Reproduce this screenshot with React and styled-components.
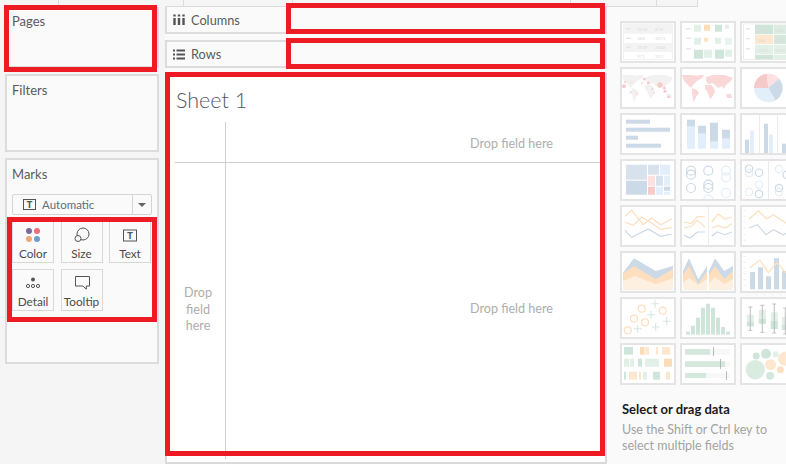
import React from "react";
import styled, { createGlobalStyle } from "styled-components";

const Global = createGlobalStyle`
  html, body { margin: 0; padding: 0; overflow: hidden; background: #fafafa; }
  * { box-sizing: border-box; }
  body { font-family: "Lato", "Liberation Sans", sans-serif; color: #555; }
`;

const Page = styled.div`
  position: relative;
  width: 786px;
  height: 464px;
  overflow: hidden;
  background: #fafafa;
  display: flex;
  flex-direction: column;
`;
const Strip = styled.div`
  flex: none;
  display: flex;
  width: 698px;
  height: 7px;
  background: #f5f5f5;
`;
const StripCell = styled.div`
  flex: none;
  width: ${(p) => p.$w}px;
  border-right: ${(p) => (p.$plain ? "0" : "1px solid #dcdcdc")};
  border-bottom: ${(p) => (p.$line ? "1px solid #dcdcdc" : "0")};
`;
const Body = styled.div`
  flex: 1;
  display: flex;
  min-height: 0;
`;
const LeftCol = styled.aside`
  flex: none;
  width: 165px;
  padding-left: 5px;
  padding-right: 6px;
  background: #f5f5f5;
  display: flex;
  flex-direction: column;
  gap: 6px;
`;
const Card = styled.section`
  flex: none;
  height: ${(p) => p.$h}px;
  background: #fafafa;
  border: 2px solid #dcdcdc;
  padding: ${(p) => p.$pt ?? 6}px 0 0 5px;
`;
const CardTitle = styled.div`
  font-size: 13px;
  line-height: 16px;
  color: #5a5a5a;
`;
const MarkSelect = styled.div`
  display: flex;
  align-items: center;
  width: 140px;
  height: 21px;
  margin-top: 12px;
  border: 1px solid #d4d4d4;
  border-radius: 2px;
  font-size: 11.5px;
  color: #5f6d7a;
`;
const SelectMain = styled.div`
  flex: 1;
  height: 100%;
  display: flex;
  align-items: center;
  gap: 6px;
  padding-left: 10px;
  border-right: 1px solid #d4d4d4;
`;
const SelectCaret = styled.div`
  flex: none;
  width: 18px;
  display: flex;
  justify-content: center;
  &::after {
    content: "";
    border-left: 4px solid transparent;
    border-right: 4px solid transparent;
    border-top: 4px solid #666;
  }
`;
const MarkGrid = styled.div`
  display: grid;
  grid-template-columns: repeat(3, 42px);
  grid-auto-rows: 42px;
  column-gap: 6.5px;
  row-gap: 6px;
  margin-top: 6px;
`;
const MarkButton = styled.div`
  display: flex;
  flex-direction: column;
  align-items: center;
  padding-top: 3px;
  border: 1px solid #d8d8d8;
  background: #fafafa;
  font-size: 11.75px;
  color: #4a4a4a;
  white-space: nowrap;
`;
const MarkIcon = styled.svg`
  display: block;
  flex: none;
  width: 20px;
  height: 20px;
  margin-bottom: 2px;
`;
const MarkLabel = styled.span`
  line-height: 14px;
`;
const TextIconGlyph = styled.text`
  font-family: "Liberation Mono", monospace;
  font-size: 10px;
  font-weight: 700;
  fill: #555;
`;

const Center = styled.main`
  flex: none;
  width: 442px;
  display: flex;
  flex-direction: column;
`;
const Shelf = styled.div`
  flex: none;
  height: ${(p) => p.$h}px;
  margin-bottom: ${(p) => p.$mb}px;
  display: flex;
  align-items: center;
  gap: 6px;
  padding-left: 6px;
  background: #fafafa;
  border: 2px solid #dcdcdc;
  border-top-width: ${(p) => p.$bt}px;
  font-size: 12.75px;
  color: #5a5a5a;
`;
const ShelfIcon = styled.svg`
  display: block;
  flex: none;
  width: 12px;
  height: 11px;
`;
const SheetPanel = styled.div`
  flex: 1;
  min-height: 0;
  display: flex;
  flex-direction: column;
  background: #fff;
  border: 2px solid #dadada;
  border-top: 0;
  padding: 0 0 3px 8px;
`;
const SheetTitle = styled.h1`
  flex: none;
  margin: 16px 0 0 1px;
  height: 33px;
  font-size: 21.5px;
  line-height: 22px;
  font-weight: 300;
  color: #4d5a66;
`;
const ViewGrid = styled.div`
  flex: 1;
  min-height: 0;
  display: grid;
  grid-template-columns: 51px 1fr;
  grid-template-rows: 41px 1fr;
  font-size: 12.6px;
  color: #aeaeae;
`;
const AxisCell = styled.div`
  display: flex;
  align-items: center;
  justify-content: center;
  text-align: center;
  line-height: 16.5px;
  padding: 0 4px 2px 0;
  border-right: 1px solid #cfcfcf;
  border-bottom: ${(p) => (p.$under ? "1px solid #cfcfcf" : "0")};
`;
const DropCell = styled.div`
  display: flex;
  align-items: center;
  justify-content: flex-end;
  padding: ${(p) => p.$pt}px 52px ${(p) => p.$pb}px 0;
  border-bottom: ${(p) => (p.$under ? "1px solid #cfcfcf" : "0")};
`;

const RightCol = styled.aside`
  flex: 1;
  min-width: 0;
  padding: 14px 0 0 13px;
  background: #fafafa;
`;
const ThumbGrid = styled.div`
  display: grid;
  grid-template-columns: repeat(3, 56px);
  grid-auto-rows: 42px;
  gap: 4px;
`;
const Thumb = styled.div`
  width: 56px;
  height: 42px;
  background: #fff;
  border: 2px solid #e4e4e4;
  overflow: hidden;
`;
const ThumbArt = styled.svg`
  display: block;
  width: 52px;
  height: 38px;
`;
const ThumbNum = styled.text`
  font-family: "Lato", sans-serif;
  font-size: 4.5px;
  fill: #dcdcdc;
`;
const HintTitle = styled.div`
  margin: 17px 0 0 2px;
  font-size: 13px;
  line-height: 14px;
  font-weight: 700;
  color: #1a1a1a;
  white-space: nowrap;
`;
const HintText = styled.div`
  margin: 6px 0 0 2px;
  font-size: 12.5px;
  line-height: 16px;
  color: #a3a3a3;
  white-space: nowrap;
`;
const Highlight = styled.div`
  position: absolute;
  left: ${(p) => p.$x}px;
  top: ${(p) => p.$y}px;
  width: ${(p) => p.$w}px;
  height: ${(p) => p.$h}px;
  border: 5px solid #ed1c24;
  pointer-events: none;
`;

const BLUE = "#ccd9e6", LBLUE = "#e2eef9", OR = "#fddfc0", LOR = "#fdf0e0", GR = "#cfe5da", LGR = "#e2f0e8", PK = "#f7caca", LPK = "#fde0e0";

const Art = ({ children }) => <ThumbArt viewBox="2 2 52 38">{children}</ThumbArt>;

const R = ({ x, y, w, h, c }) => <rect x={x} y={y} width={w} height={h} fill={c} />;
const Line = ({ p, c = OR, w = 1.2 }) => <polyline points={p} fill="none" stroke={c} strokeWidth={w} />;
const Dash = ({ x = 6, w = 5, y }) => <rect x={x} y={y - 0.7} width={w} height={1.4} fill="#e6e6e6" />;
const Ring = ({ x, y, r = 4.5, c = BLUE }) => <circle cx={x} cy={y} r={r} fill="none" stroke={c} strokeWidth={1.2} />;

const WorldMap = ({ fill }) => (
  <g fill={fill}>
    <polygon points="2,8 10,8 20,9 22,11 17,14 13,18 11,21 9,19 5,15 3,12" />
    <polygon points="18,8 24,8 22,11 19,10" />
    <polygon points="12,21 17,23 19,26 16,30 14,35 13,33 12,26" />
    <polygon points="26,10 33,8 45,8 53,11 50,15 46,18 44,22 42,19 38,21 36,19 33,16 28,17 26,14" />
    <polygon points="25,18 31,18 34,21 35,25 32,30 30,32 29,29 27,24 25,22" />
    <polygon points="46,27 51,27 52,31 47,31" />
  </g>
);

const sector = (cx, cy, r, a, b) => {
  const t = (d) => [cx + r * Math.sin((d * Math.PI) / 180), cy - r * Math.cos((d * Math.PI) / 180)];
  const [x1, y1] = t(a), [x2, y2] = t(b);
  return `M${cx} ${cy}L${x1} ${y1}A${r} ${r} 0 ${b - a > 180 ? 1 : 0} 1 ${x2} ${y2}Z`;
};

const thumbs = [
  <>
    <rect x="3.5" y="2.9" width="49" height="35.6" fill="#fff" stroke="#ececec" strokeWidth=".7" />
    <R x={3.5} y={3} w={49} h={9.7} c="#f3f3f3" />
    <R x={3.5} y={22} w={49} h={9} c="#f3f3f3" />
    <Dash y={7.7} /><Dash y={17.3} /><Dash y={26.3} />
    <ThumbNum x="17" y="9.7">1234</ThumbNum><ThumbNum x="35" y="9.7">678</ThumbNum>
    <ThumbNum x="17" y="19">368</ThumbNum><ThumbNum x="35" y="19">3011</ThumbNum>
    <ThumbNum x="17" y="28">2929</ThumbNum><ThumbNum x="35" y="28">2368</ThumbNum>
    <ThumbNum x="17" y="37">971</ThumbNum><ThumbNum x="35" y="37">322</ThumbNum>
  </>,
  <>
    <Dash y={7.7} /><Dash y={17.3} /><Dash y={27.7} />
    <R x={14} y={3.7} w={7} h={7} c={LGR} /><R x={24} y={3.7} w={6} h={6} c="#fddcb8" /><R x={35} y={3.7} w={7} h={7} c={GR} /><R x={45} y={3.7} w={4} h={4} c={LGR} />
    <R x={14} y={16.7} w={7} h={7} c={LGR} /><R x={24} y={16.7} w={4} h={4} c="#fde3c6" /><R x={35} y={16.7} w={6} h={6} c={LGR} /><R x={45} y={16.7} w={7} h={7} c="#e8f3ed" />
    <R x={14} y={28.7} w={9} h={9} c={GR} /><R x={24} y={28.7} w={8} h={8} c={LGR} /><R x={35} y={28.7} w={9} h={9} c={GR} /><R x={45} y={28.7} w={7} h={7} c={LGR} />
  </>,
  <>
    <rect x="3.5" y="2.9" width="49" height="35.6" fill="#fff" stroke="#e6e6e6" strokeWidth=".7" />
    <Dash y={7.7} w={4} /><Dash y={17.7} w={4} /><Dash y={27.7} w={4} />
    <R x={15} y={3.7} w={18.3} h={9.6} c={GR} /><R x={34} y={3.7} w={20} h={9.6} c="#dcebe3" />
    <R x={15} y={14} w={18.3} h={9} c="#fde7cf" /><R x={34} y={14} w={20} h={9} c="#d5e8de" />
    <R x={15} y={23.7} w={18.3} h={9.3} c={LGR} /><R x={34} y={23.7} w={20} h={9.3} c={LGR} />
    <R x={15} y={33.7} w={18.3} h={4.5} c={GR} /><R x={34} y={33.7} w={20} h={4.5} c={LGR} />
    <ThumbNum x="17" y="10.5">1234</ThumbNum><ThumbNum x="35" y="10.5">540</ThumbNum>
    <ThumbNum x="17" y="20.5">368</ThumbNum><ThumbNum x="35" y="20.5">386</ThumbNum>
    <ThumbNum x="17" y="30.5">2929</ThumbNum><ThumbNum x="35" y="30.5">5368</ThumbNum>
  </>,
  <>
    <WorldMap fill="#f1f1f1" />
    <g fill={PK}>
      <circle cx="4" cy="19.3" r="2" /><circle cx="5" cy="15" r="1" /><circle cx="24.3" cy="12" r="1.5" />
      <circle cx="28.3" cy="16" r="1.5" /><circle cx="40" cy="18" r="2.7" /><circle cx="44.3" cy="21" r="1.5" />
      <circle cx="45" cy="24.3" r="1.5" /><circle cx="32.3" cy="22" r="1" /><circle cx="10.7" cy="25.3" r="1" /><circle cx="48.7" cy="30" r="1.3" />
    </g>
    <g fill={LPK}>
      <circle cx="16.7" cy="27" r="1.4" /><circle cx="11" cy="15" r="1.5" /><circle cx="22" cy="16" r="1.3" /><circle cx="34" cy="26" r="1.2" />
    </g>
  </>,
  <WorldMap fill="#fbd8d8" />,
  <>
    <path d={sector(28.3, 21, 14.3, 270, 355)} fill={PK} />
    <path d={sector(28.3, 21, 14.3, 355, 410)} fill={LPK} />
    <path d={sector(28.3, 21, 14.3, 50, 150)} fill={BLUE} />
    <path d={sector(28.3, 21, 14.3, 150, 270)} fill={LBLUE} />
  </>,
  <>
    <R x={6} y={6.7} w={24} h={4} c={BLUE} /><R x={6} y={14.7} w={44} h={4} c={BLUE} />
    <R x={6} y={22.7} w={12} h={4} c={BLUE} /><R x={6} y={30.7} w={35} h={4} c={BLUE} />
  </>,
  <>
    {[[7, 6.7, 13.7], [18, 12.7, 20.7], [30, 9.7, 28.7], [42, 16.7, 25.7]].map(([x, t, s]) => (
      <g key={x}><R x={x} y={t} w={8} h={s - t} c={BLUE} /><R x={x} y={s} w={8} h={35.7 - s} c={LBLUE} /></g>
    ))}
  </>,
  <>
    <R x={19} y={2} w={.8} h={38} c="#e8e8e8" /><R x={37} y={2} w={.8} h={38} c="#e8e8e8" />
    <R x={5} y={26.7} w={4} h={14} c={BLUE} /><R x={10} y={17.7} w={4} h={23} c={LBLUE} />
    <R x={24} y={10.7} w={4} h={30} c={BLUE} /><R x={29} y={21.7} w={4} h={19} c={LBLUE} />
    <R x={42} y={30.7} w={4} h={10} c={BLUE} /><R x={47} y={24} w={4} h={17} c={LBLUE} />
  </>,
  <>
    <R x={6} y={5.7} w={21} h={15} c="#d7e2ed" /><R x={6} y={21.7} w={21} h={14} c={BLUE} />
    <R x={28} y={5.7} w={11} h={10} c="#d7e2ed" /><R x={40} y={5.7} w={10} h={10} c={LBLUE} />
    <R x={28} y={16.7} w={7} h={10} c={LPK} /><R x={28} y={27.7} w={7} h={8} c={PK} />
    <R x={36} y={16.7} w={7} h={10} c="#d7e2ed" /><R x={44} y={16.7} w={6} h={10} c={LBLUE} />
    <R x={36} y={27.7} w={7} h={8} c={LBLUE} /><R x={44} y={27.7} w={6} h={4} c={BLUE} /><R x={44} y={32.7} w={6} h={3} c={LBLUE} />
  </>,
  <>
    <Ring x={11} y={11.7} /><Ring x={11} y={15.7} /><Ring x={11} y={29} />
    <Ring x={28.3} y={11.7} /><Ring x={28.3} y={25.7} /><Ring x={28.3} y={29} /><Ring x={28.3} y={40.7} c={LBLUE} />
    <Ring x={46} y={11.7} c={LBLUE} /><Ring x={46} y={18.3} c={LBLUE} /><Ring x={46} y={34} c={LBLUE} />
  </>,
  <>
    <R x={28} y={2} w={.8} h={38} c="#e8e8e8" />
    <Ring x={9} y={9.7} r={3.7} /><Ring x={9} y={14} r={3.7} c={LBLUE} /><Ring x={19} y={13.7} r={3.7} /><Ring x={19} y={25.7} r={3.7} c={LBLUE} />
    <Ring x={9} y={33} r={3.7} c={LBLUE} /><Ring x={19} y={35} r={3.7} />
    <Ring x={39} y={10} r={3.7} c={LBLUE} /><Ring x={39} y={29} r={3.7} /><Ring x={39} y={33} r={3.7} c={LBLUE} /><Ring x={46.7} y={15.7} r={3.7} />
  </>,
  <>
    <Line p="5,11.3 11.7,5.3 23.3,19.7 31.7,13 40.7,19.7 51.7,14" />
    <Line p="5,17.3 13.3,20.3 21.7,12 31.7,18 40.7,24.7 51.7,22.3" />
    <Line p="5,25.3 11.7,32.3 28.3,24 40.7,31.3 51.7,29" c={BLUE} />
  </>,
  <>
    <R x={28} y={2} w={.8} h={38} c="#e8e8e8" />
    <Line p="4,17 11.7,18.7 17.3,11.3 25,12" /><Line p="4,23 11.7,21.3 17.3,15.3 25,22" /><Line p="4,30.3 10,33 17.3,27 25,27" c={BLUE} />
    <Line p="31.7,17 38.3,9 45,14 51.7,12" /><Line p="31.7,23 38.3,20.7 45,23 51.7,18.7" /><Line p="31.7,31.3 37.3,27 45,29.7 51.7,27" c={BLUE} />
  </>,
  <>
    {[4.7, 10.7, 16.7, 22.7, 28.7, 34.7].map((y) => <R key={y} x={3.3} y={y} w={2.4} h={.8} c="#e6e6e6" />)}
    <Line p="9.3,14 18.3,5.7 26.7,14 33.3,9.7 46,18 54,14" />
    <Line p="9.3,23 17.3,19.7 26,29.7 33.3,24.7 43.3,29.7 54,24" c={BLUE} />
  </>,
  <>
    <polygon points="3,21.7 14,7.3 35.7,20 53,15 53,38.3 3,38.3" fill={BLUE} />
    <polygon points="3,22.3 14,15 35.7,28.3 53,17.7 53,38.3 3,38.3" fill={OR} />
    <polygon points="3,30 15,25 35.7,33.3 53,27.3 53,38.3 3,38.3" fill={LOR} />
  </>,
  <>
    <polygon points="3,20 9,7.3 18.3,28.3 27,15 27,38.3 3,38.3" fill={BLUE} />
    <polygon points="3,24 9,15 18.3,33 27,20 27,38.3 3,38.3" fill={OR} />
    <polygon points="3,32 9,27 18.3,34 27,28 27,38.3 3,38.3" fill={LOR} />
    <polygon points="29,20 35,7.3 44.3,20 53,15 53,38.3 29,38.3" fill={BLUE} />
    <polygon points="29,24 35,15 44.3,28 53,20 53,38.3 29,38.3" fill={OR} />
    <polygon points="29,32 35,26 44.3,33 53,28 53,38.3 29,38.3" fill={LOR} />
  </>,
  <>
    {[5, 10.7, 16.7, 22.3, 28.3, 34.3].map((y) => <R key={y} x={3.3} y={y} w={2.4} h={.8} c="#e6e6e6" />)}
    <R x={10} y={21} w={5} h={17.3} c={BLUE} /><R x={18} y={16.3} w={5} h={22} c={BLUE} /><R x={26} y={25.3} w={5} h={13} c={BLUE} />
    <R x={34} y={7.3} w={5} h={31} c={BLUE} /><R x={42} y={20} w={5} h={18.3} c={BLUE} />
    <Line p="10,16.7 20,9 28.3,21.7 36.7,11.7 46,21.7 54,26" />
  </>,
  <>
    <g fill="none" stroke={OR} strokeWidth="1.2">
      <circle cx="21.7" cy="11.7" r="3.5" /><circle cx="14" cy="21.7" r="3.5" /><circle cx="42.7" cy="13.7" r="3.5" />
      <circle cx="25" cy="25.3" r="3.5" /><circle cx="7.7" cy="33.3" r="3.5" />
    </g>
    <path d="M35 2.7v8M31 6.7h8M31 13.7v8M27 17.7h8M46.7 20.3v8M42.7 24.3h8M17.7 27.7v8M13.7 31.7h8M35.7 26v8M31.7 30h8" stroke="#d5e8de" strokeWidth="1.1" fill="none" />
  </>,
  <>
    {[[6, 34.7], [11, 28.7], [16, 20.7], [21, 10.7], [26, 6.7], [31, 10.7], [36, 20.7], [41, 30], [46, 34.7]].map(([x, y]) => (
      <R key={x} x={x} y={y} w={4} h={37.7 - y} c={GR} />
    ))}
  </>,
  <>
    {[[10.3, 10, 33.3, 17.7, 25, 29.3], [22.3, 8.3, 35.3, 12.7, 22, 26.7], [34.3, 7, 36, 15.3, 24, 32], [45.3, 11, 37, 20, 28, 33]].map(([c, t, b, bt, m, bb]) => (
      <g key={c}>
        <R x={c - 3.5} y={bt} w={7} h={bb - bt} c={LGR} />
        <R x={c - 3.5} y={m} w={7} h={bb - m} c={GR} />
        <path d={`M${c} ${t}V${b}M${c - 2} ${t}h4M${c - 2} ${b}h4`} stroke="#b8b8b8" strokeWidth=".9" fill="none" />
      </g>
    ))}
  </>,
  <>
    <R x={4} y={4} w={9} h={7.7} c={GR} /><R x={20} y={4} w={4.5} h={7.7} c="#fbdcb8" /><R x={25.3} y={4} w={3.7} h={7.7} c="#fde7cf" /><R x={36} y={4} w={2} h={7.7} c="#fde7cf" /><R x={42} y={4} w={8} h={7.7} c="#fde7cf" />
    <R x={4} y={15.7} w={5} h={8} c={LGR} /><R x={10} y={15.7} w={4} h={8} c={LGR} /><R x={18} y={15.7} w={4} h={8} c={GR} /><R x={25} y={15.7} w={14} h={8} c={LGR} /><R x={44} y={15.7} w={8} h={8} c="#fbdcb8" />
    <R x={4} y={28.7} w={2} h={8} c={GR} /><R x={9} y={28.7} w={8} h={8} c="#fde7cf" /><R x={19} y={28.7} w={2} h={8} c="#fde7cf" /><R x={23} y={28.7} w={4} h={8} c={LGR} /><R x={33} y={28.7} w={7} h={8} c={GR} /><R x={46} y={28.7} w={4} h={8} c="#fde7cf" />
  </>,
  <>
    <R x={5} y={6} w={45} h={5.7} c="#f7f7f7" /><R x={5} y={18.3} w={45} h={5.7} c="#f7f7f7" /><R x={5} y={30} w={45} h={5} c="#f7f7f7" />
    <R x={5} y={6} w={25} h={5.7} c="#d5e8de" /><R x={5} y={18.3} w={40} h={5.7} c="#d5e8de" /><R x={5} y={30} w={21} h={5} c="#d5e8de" />
    <R x={33} y={4} w={.8} h={9} c="#aaa" /><R x={40} y={16} w={.8} h={10} c="#aaa" /><R x={46} y={28} w={.8} h={9} c="#aaa" />
  </>,
  <>
    <circle cx="15.3" cy="26.7" r="9.7" fill="#daecdf" /><circle cx="26" cy="10.7" r="5" fill={GR} /><circle cx="16.3" cy="13" r="3.5" fill={GR} />
    <circle cx="35.7" cy="11.3" r="3" fill={LGR} /><circle cx="30.7" cy="21.7" r="5.5" fill="#fde7cf" /><circle cx="40.3" cy="26.7" r="3.5" fill="#fde0c0" />
    <circle cx="30" cy="32.7" r="4" fill="#d5e8de" /><circle cx="45" cy="15.7" r="7" fill="#fde7cf" />
  </>,
];

const TBoxSvg = styled.svg`
  display: block;
  flex: none;
  width: 13px;
  height: 11px;
`;
const TBox = () => (
  <TBoxSvg viewBox="0 0 13 11">
    <rect x=".5" y=".5" width="12" height="10" fill="none" stroke="#555" />
    <TextIconGlyph x="3.5" y="8.5">T</TextIconGlyph>
  </TBoxSvg>
);

const marks = [
  ["Color", (
    <g>
      <circle cx="6" cy="6" r="3" fill="#7b6a9b" /><circle cx="14" cy="6" r="3" fill="#f06c7c" />
      <circle cx="6" cy="14" r="3" fill="#f0a878" /><circle cx="14" cy="14" r="3" fill="#6f9bcd" />
    </g>
  )],
  ["Size", (
    <g fill="none" stroke="#555">
      <circle cx="11" cy="9" r="6" /><circle cx="6" cy="13.5" r="3" fill="#fafafa" />
    </g>
  )],
  ["Text", (
    <g>
      <rect x="3.5" y="5" width="13" height="11" fill="none" stroke="#555" />
      <TextIconGlyph x="7" y="13.5">T</TextIconGlyph>
    </g>
  )],
  ["Detail", (
    <g fill="none" stroke="#555">
      <circle cx="10" cy="6.5" r="2" fill="#555" stroke="none" />
      <circle cx="5" cy="13" r="1.6" /><circle cx="10" cy="13" r="1.6" /><circle cx="15" cy="13" r="1.6" />
    </g>
  )],
  ["Tooltip", (
    <path d="M3.5 3.5h14v9.5h-3.2v3.2l-3.4-3.2h-7.4z" fill="none" stroke="#555" />
  )],
];

export default function App() {
  return (
    <Page>
      <Global />
      <Strip>
        <StripCell $w={59} />
        <StripCell $w={106} $plain />
        <StripCell $w={19} $line />
        <StripCell $w={109} $line />
        <StripCell $w={278} $line />
        <StripCell $w={86} $line />
        <StripCell $w={41} $line />
      </Strip>
      <Body>
        <LeftCol>
          <Card $h={61} $pt={4}><CardTitle>Pages</CardTitle></Card>
          <Card $h={78}><CardTitle>Filters</CardTitle></Card>
          <Card $h={206}>
            <CardTitle>Marks</CardTitle>
            <MarkSelect>
              <SelectMain><TBox />Automatic</SelectMain>
              <SelectCaret />
            </MarkSelect>
            <MarkGrid>
              {marks.map(([label, icon]) => (
                <MarkButton key={label}>
                  <MarkIcon viewBox="0 0 20 20">{icon}</MarkIcon>
                  <MarkLabel>{label}</MarkLabel>
                </MarkButton>
              ))}
            </MarkGrid>
          </Card>
        </LeftCol>
        <Center>
          <Shelf $h={27} $bt={0} $mb={6}>
            <ShelfIcon viewBox="0 0 12 11">
              <path d="M1.5 4v7M6 4v7M10.5 4v7" stroke="#555" strokeWidth="2.4" />
              <path d="M1.5 0.6v1.8M6 0.6v1.8M10.5 0.6v1.8" stroke="#555" strokeWidth="2.4" />
            </ShelfIcon>
            Columns
          </Shelf>
          <Shelf $h={28} $bt={2} $mb={5}>
            <ShelfIcon viewBox="0 0 12 11">
              <path d="M0 1.5h2M3.5 1.5H12M0 5.5h2M3.5 5.5H12M0 9.5h2M3.5 9.5H12" stroke="#555" strokeWidth="1.9" />
            </ShelfIcon>
            Rows
          </Shelf>
          <SheetPanel>
            <SheetTitle>Sheet 1</SheetTitle>
            <ViewGrid>
              <AxisCell $under />
              <DropCell $under $pt={2} $pb={0}>Drop field here</DropCell>
              <AxisCell><span>Drop<br />field<br />here</span></AxisCell>
              <DropCell $pt={0} $pb={6}>Drop field here</DropCell>
            </ViewGrid>
          </SheetPanel>
        </Center>
        <RightCol>
          <ThumbGrid>
            {thumbs.map((t, i) => (
              <Thumb key={i}><Art>{t}</Art></Thumb>
            ))}
          </ThumbGrid>
          <HintTitle>Select or drag data</HintTitle>
          <HintText>Use the Shift or Ctrl key to<br />select multiple fields</HintText>
        </RightCol>
      </Body>
      <Highlight $x={4} $y={5} $w={153} $h={67} />
      <Highlight $x={7} $y={217} $w={150} $h={105} />
      <Highlight $x={286} $y={3} $w={319} $h={31} />
      <Highlight $x={286} $y={38} $w={319} $h={31} />
      <Highlight $x={165} $y={72} $w={440} $h={384} />
    </Page>
  );
}
